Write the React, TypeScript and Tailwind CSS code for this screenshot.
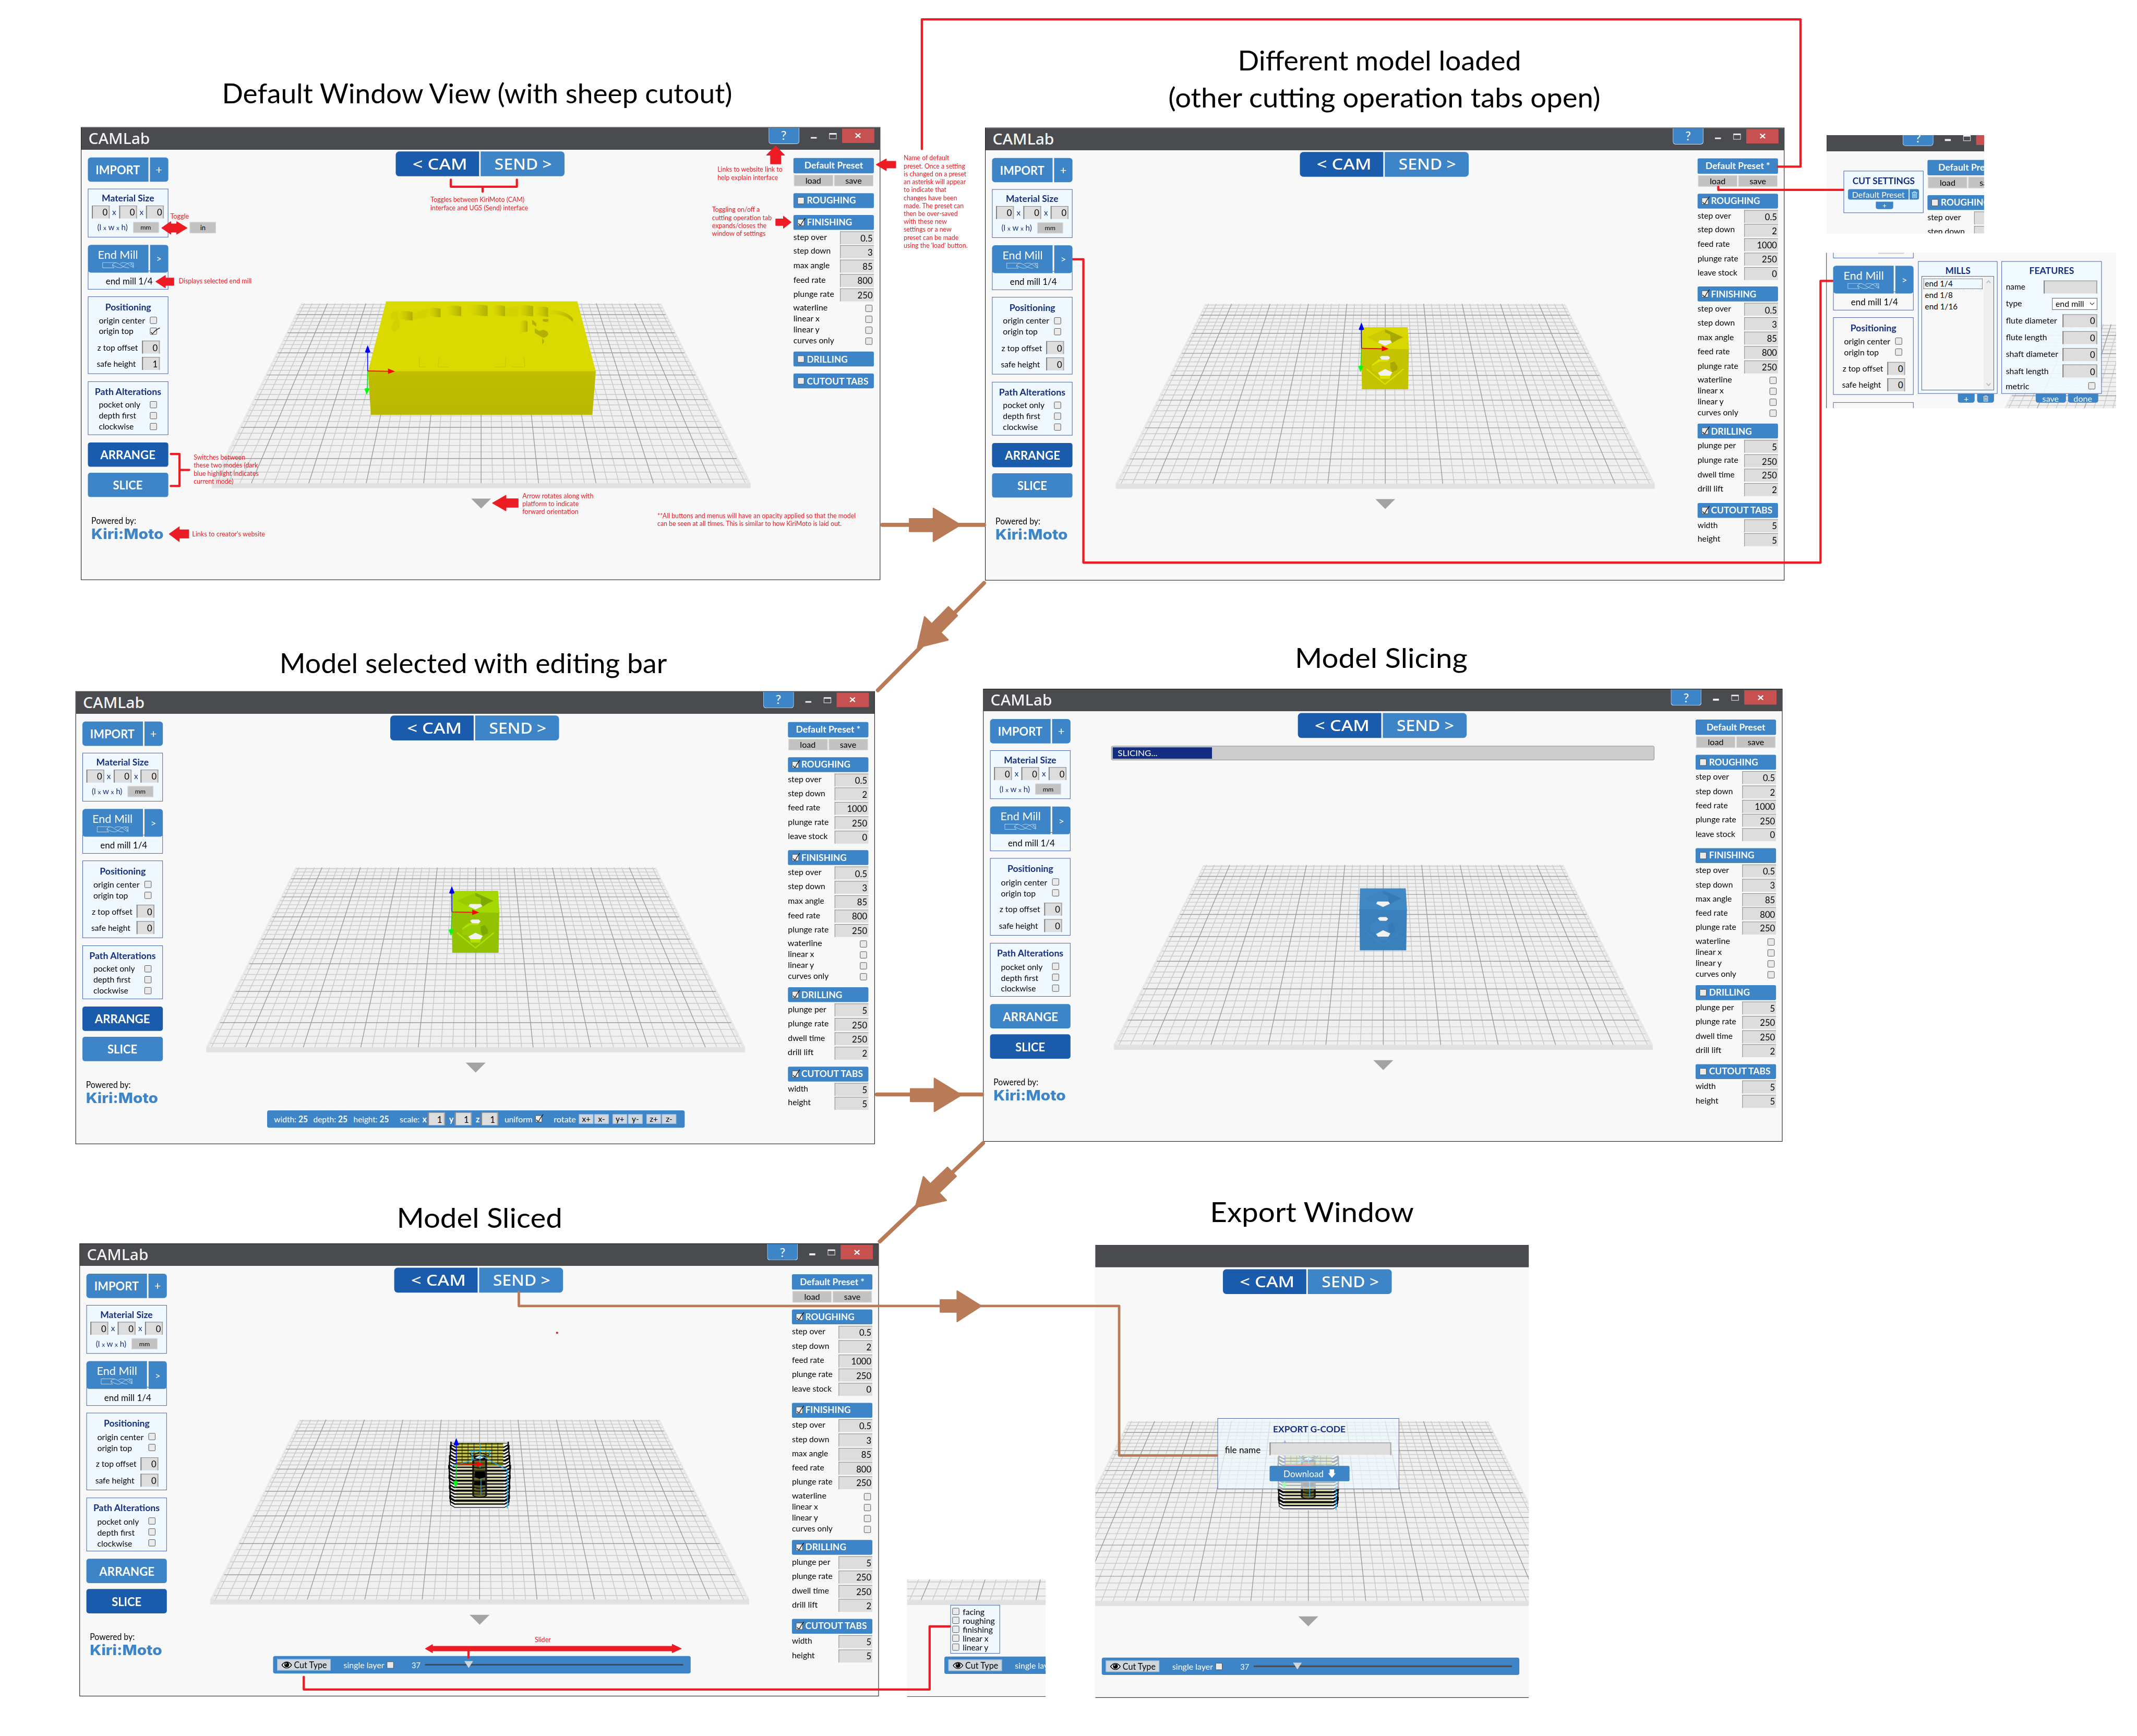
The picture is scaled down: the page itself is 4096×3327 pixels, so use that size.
import { ReactNode, useId, useLayoutEffect, useRef } from "react";

/* Text stretched horizontally to a given width, so labels keep their drawn measure. */
function Fit({ w, className = "", children }: { w: number; className?: string; children: ReactNode }) {
  const ref = useRef<HTMLSpanElement>(null);
  useLayoutEffect(() => {
    const el = ref.current;
    if (el && el.offsetWidth > 0) el.style.transform = `scaleX(${w / el.offsetWidth})`;
  }, [w]);
  return (
    <span className={`inline-block text-left ${className}`} style={{ width: w }}>
      <span ref={ref} className="inline-block origin-left whitespace-pre">
        {children}
      </span>
    </span>
  );
}

function At({ x, y, children, className = "" }: { x: number; y: number; children: ReactNode; className?: string }) {
  return (
    <div className={`absolute ${className}`} style={{ left: x, top: y }}>
      {children}
    </div>
  );
}

/* ---------- small controls ---------- */

function Check({ on = false, header = false }: { on?: boolean; header?: boolean }) {
  return (
    <span className="relative block h-[14px] w-[14px] shrink-0 rounded-[2px] border border-[#4a4a4a] bg-[#eaeaea] shadow-[inset_0_0_0_1px_#f8f8f8]">
      {on && (
        <svg className="absolute -top-[4px] -left-[1px] h-[18px] w-[20px] overflow-visible" viewBox="0 0 20 18" fill="none" stroke="#000">
          <path d={header ? "M2 12 L5 15 L7 15 Q10 8 16 1" : "M2 12 L5 15.5 Q12 6 20 3.5"} strokeWidth="1.3" />
        </svg>
      )}
    </span>
  );
}

function Num({ v, className = "" }: { v: string; className?: string }) {
  return (
    <span
      className={`flex h-[26px] items-center justify-end border-t border-r-[2px] border-l-[2.5px] border-t-[#7f7f7f] border-r-[#a9a4a0] border-l-[#7f7f7f] bg-[#dddddd] pt-[2px] pr-[2px] text-[17.5px] leading-none text-black ${className}`}
    >
      {v}
    </span>
  );
}

function GreyButton({ children, className = "" }: { children: ReactNode; className?: string }) {
  return (
    <span className={`flex items-center justify-center border border-[#dcdcdc] bg-[#c2c2c2] leading-none text-black ${className}`}>
      {children}
    </span>
  );
}

function Trash({ className = "" }: { className?: string }) {
  return (
    <svg className={className} viewBox="0 0 12 14" fill="none" stroke="#fff" strokeWidth="1">
      <path d="M0.5 3 H11.5 M4 3 V1 H8 V3 M1.8 3 V13.2 H10.2 V3 M4 5 V11.5 M6 5 V11.5 M8 5 V11.5" />
    </svg>
  );
}

/* ---------- left panel ---------- */

function Box({ className = "", plain = false, children }: { className?: string; plain?: boolean; children?: ReactNode }) {
  return (
    <div className={`border-[1.5px] border-[#3f5aa6] ${plain ? "bg-[#f8f8f8]" : "bg-[#f0f9ff]"} ${className}`}>{children}</div>
  );
}

function CheckRow({ label, w, on = false, className = "" }: { label: string; w: number; on?: boolean; className?: string }) {
  return (
    <div className={`flex items-center justify-between pr-[22px] pl-[21px] text-[17px] leading-none ${className}`}>
      <Fit w={w}>{label}</Fit>
      <Check on={on} />
    </div>
  );
}

function ModeButton({ active, w, children, className = "" }: { active: boolean; w: number; children: string; className?: string }) {
  return (
    <div
      className={`flex h-[49px] items-center justify-center rounded-[5px] pt-[2px] text-[23px] leading-none font-bold text-white ${active ? "bg-[#1a5bab]" : "bg-[#3e85c7]"} ${className}`}
    >
      <Fit w={w}>{children}</Fit>
    </div>
  );
}

/* "partial" leaves only the tool and positioning groups, with the plain background. */
function LeftPanel({ originTop, safe, mode, partial }: { originTop: boolean; safe: string; mode: string; partial?: boolean }) {
  return (
    <div className="flex w-[162px] flex-col pt-[16px]">
      {partial ? (
        <div className="h-[49px]" />
      ) : (
        <div className="flex h-[49px] gap-[3px] text-white">
          <div className="flex w-[122px] items-center justify-center rounded-l-[6px] bg-[#3e85c7] pt-[2px] text-[23px] leading-none font-bold">
            <Fit w={90}>IMPORT</Fit>
          </div>
          <div className="flex w-[37px] items-center justify-center rounded-r-[6px] bg-[#3e85c7] text-[23px] leading-none">+</div>
        </div>
      )}

      {partial ? (
        <Box plain className="mt-[14px] flex h-[98px] items-end justify-end pr-[18px] pb-[8px]">
          <GreyButton className="h-[22px] w-[52px]">{null}</GreyButton>
        </Box>
      ) : (
        <Box className="mt-[14px] flex h-[98px] flex-col items-center pt-[9px] text-[#142d80]">
          <div className="text-[17.5px] leading-[20px] font-bold">
            <Fit w={106}>Material Size</Fit>
          </div>
          <div className="mt-[4px] flex items-center gap-[5.5px] text-[16px] leading-none">
            <Num v="0" className="w-[36px]" />
            <span>x</span>
            <Num v="0" className="w-[36px]" />
            <span>x</span>
            <Num v="0" className="w-[36px]" />
          </div>
          <div className="mt-[7px] flex w-full items-center justify-between pr-[18px] pl-[18px]">
            <Fit w={61} className="-mt-[2px] text-[17px] leading-none">
              (l <span className="text-[13px]">x</span> w <span className="text-[13px]">x</span> h)
            </Fit>
            <GreyButton className="h-[22px] w-[52px] text-[13px]">mm</GreyButton>
          </div>
        </Box>
      )}

      <div className="relative z-10 mt-[15px] flex h-[56px] gap-[3px] text-white">
        <div className="flex w-[122px] flex-col items-center rounded-l-[6px] bg-[#3e85c7] pt-[7px] text-[23px] leading-[24px]">
          <Fit w={81}>End Mill</Fit>
          <svg className="mt-[4px] h-[12px] w-[64px]" viewBox="0 0 64 12" fill="none" stroke="#d5e8fa" strokeWidth="0.9">
            <path d="M24 0.7 H0.7 V11.3 H24 M24 0.7 C36 0.7 38 11.3 54 11.3 M24 11.3 C18 7 20 2 28 0.7 M20 5 C26 9 30 11.3 36 11.3 C44 11.3 46 0.7 60 0.7 M36 2.5 C42 0 46 0.7 49 2 C54 4 56 9 62 10 M62.8 0.7 V11.3 M62.8 0.7 L57 4 L61 6 L62.8 10" />
          </svg>
        </div>
        <div className="flex w-[37px] items-center justify-center rounded-r-[6px] bg-[#3e85c7] text-[19px] leading-none">&gt;</div>
      </div>
      <Box plain={partial} className="-mt-[4px] flex h-[38px] items-center justify-center pt-[4px] pl-[4px] text-[18px] leading-none text-black">
        <Fit w={94}>end mill 1/4</Fit>
      </Box>

      <Box plain={partial} className="mt-[14px] h-[156px] pt-[10px]">
        <div className="flex justify-center text-[17.5px] leading-[22px] font-bold text-[#142d80]">
          <Fit w={92}>Positioning</Fit>
        </div>
        <CheckRow label="origin center" w={93} className="mt-[4px] h-[22px]" />
        <CheckRow label="origin top" w={70} on={originTop} className="h-[22px]" />
        <div className="mt-[5px] flex h-[33px] items-center justify-between pr-[16px] pl-[18px] text-[17px] leading-none">
          <Fit w={82}>z top offset</Fit>
          <Num v="0" className="w-[36px]" />
        </div>
        <div className="flex h-[33px] items-center justify-between pr-[16px] pl-[17px] text-[17px] leading-none">
          <Fit w={79}>safe height</Fit>
          <Num v={safe} className="w-[36px]" />
        </div>
      </Box>

      <Box plain={partial} className="mt-[15px] h-[108px] pt-[9px]">
        {!partial && (
          <>
            <div className="flex justify-center text-[17.5px] leading-[22px] font-bold text-[#142d80]">
              <Fit w={134}>Path Alterations</Fit>
            </div>
            <CheckRow label="pocket only" w={84} className="mt-[4px] h-[22px]" />
            <CheckRow label="depth first" w={75} className="h-[22px]" />
            <CheckRow label="clockwise" w={70} className="h-[22px]" />
          </>
        )}
      </Box>

      {!partial && (
        <>
          <ModeButton active={mode === "arrange"} w={111} className="mt-[15px]">ARRANGE</ModeButton>
          <ModeButton active={mode === "slice"} w={60} className="mt-[12px]">SLICE</ModeButton>
          <div className="mt-[38px] pl-[7px] text-[17.5px] leading-[20px] text-black">
            <Fit w={90}>Powered by:</Fit>
          </div>
          <div className="mt-[1px] pl-[7px] font-['Inter'] text-[29px] leading-[30px] font-extrabold text-[#3e85c7]">
            <Fit w={146}>Kiri:Moto</Fit>
          </div>
        </>
      )}
    </div>
  );
}

/* ---------- right panel ---------- */

type Item = [string, string?];
type Section = { name: string; w: number; on?: boolean; open?: boolean; fields: Item[]; checks?: string[] };

const labelW: Record<string, number> = {
  "step over": 67,
  "step down": 75,
  "max angle": 73,
  "feed rate": 65,
  "plunge rate": 82,
  "leave stock": 80,
  waterline: 69,
  "linear x": 53,
  "linear y": 53,
  "curves only": 82,
  "plunge per": 77,
  "dwell time": 75,
  "drill lift": 52,
  width: 41,
  height: 46,
};

function sections(open: boolean, marks: boolean): Section[] {
  return [
    {
      name: "ROUGHING", w: 99, on: open && marks, open,
      fields: [["step over", "0.5"], ["step down", "2"], ["feed rate", "1000"], ["plunge rate", "250"], ["leave stock", "0"]],
    },
    {
      name: "FINISHING", w: 91, on: marks, open: true,
      fields: [["step over", "0.5"], ["step down", "3"], ["max angle", "85"], ["feed rate", "800"], ["plunge rate", "250"]],
      checks: ["waterline", "linear x", "linear y", "curves only"],
    },
    {
      name: "DRILLING", w: 82, on: open && marks, open,
      fields: [["plunge per", "5"], ["plunge rate", "250"], ["dwell time", "250"], ["drill lift", "2"]],
    },
    { name: "CUTOUT TABS", w: 124, on: open && marks, open, fields: [["width", "5"], ["height", "5"]] },
  ];
}

const firstRows: Section[] = [
  { name: "ROUGHING", w: 99, open: true, fields: [["step over", ""], ["step down", ""]] },
];

function RightPanel({ list, star }: { list: Section[]; star: boolean }) {
  return (
    <div className="flex w-[162px] flex-col pt-[17px]">
      <div className="flex h-[31px] items-center justify-center rounded-[3px] bg-[#3e85c7] text-[17.5px] leading-none font-bold text-white">
        <Fit w={star ? 130 : 118}>{star ? "Default Preset *" : "Default Preset"}</Fit>
      </div>
      <div className="mt-[3px] flex h-[23px] justify-between px-[1px]">
        <GreyButton className="w-[79px] text-[17px]">load</GreyButton>
        <GreyButton className="w-[79px] text-[17px]">save</GreyButton>
      </div>
      <div className="mt-[14px] flex flex-col">
        {list.map((s) => (
          <div key={s.name} className={s.open ? "mb-[11px]" : "mb-[14px]"}>
            <div className="flex h-[30px] items-center gap-[5px] rounded-[3px] bg-[#3e85c7] pl-[8px] text-[17.5px] leading-none font-bold text-white">
              <Check on={s.on} header />
              <Fit w={s.w}>{s.name}</Fit>
            </div>
            {s.open && (
              <div className="mt-[3px] text-[17px] leading-none text-black">
                {s.fields.map(([l, v]) => (
                  <div key={l} className="flex h-[28.8px] items-start justify-between">
                    <Fit w={labelW[l]} className="pt-[2px]">{l}</Fit>
                    <span className="flex h-[26px] w-[68px] items-center justify-end border-t-[1.5px] border-l-[1.5px] border-[#858585] bg-[#dddddd] pt-[1px] pr-[2px] text-[17.5px]">
                      {v}
                    </span>
                  </div>
                ))}
                {s.checks?.map((l) => (
                  <div key={l} className="flex h-[22px] items-start justify-between pr-[3px]">
                    <Fit w={labelW[l]} className="pt-[1px]">{l}</Fit>
                    <span className="pt-[5px]">
                      <Check />
                    </span>
                  </div>
                ))}
              </div>
            )}
          </div>
        ))}
      </div>
    </div>
  );
}

/* ---------- scene ---------- */

const CX = 805;
const HORIZON = -376;

function Bed() {
  const minor: string[] = [];
  const major: string[] = [];
  const half = (v: number) => 0.02119 * v;
  for (let n = -23; n <= 23; n++) {
    const d = `M${(CX + n * half(730)).toFixed(1)} 354 L${(CX + n * half(1092)).toFixed(1)} 716`;
    (n % 5 === 0 ? major : minor).push(d);
  }
  for (let k = -3; k <= 33; k++) {
    const v = 1 / (0.0013286 - 1.2306e-5 * k);
    const x = half(v) * 23.3;
    const y = (v + HORIZON).toFixed(1);
    const d = `M${(CX - x).toFixed(1)} ${y} H${(CX + x).toFixed(1)}`;
    (k % 5 === 0 ? major : minor).push(d);
  }
  return (
    <g>
      <path d="M442 354 H1168 L1348 716 V726 H262 V716 Z" fill="#e8e8e8" />
      <path d="M445 354 H1165 L1341 716 H269 Z" fill="#f0f0f0" />
      <path d="M263 716 H1347 V726 H264 Z" fill="#e1e1e1" />
      <path d={minor.join("")} stroke="#c9c9c9" strokeWidth="1.5" fill="none" />
      <path d={major.join("")} stroke="#9c9c9c" strokeWidth="1.5" fill="none" />
      <path d="M785 747 H825 L805 767 Z" fill="#a3a3a3" />
    </g>
  );
}

function Axes({ x, y }: { x: number; y: number }) {
  return (
    <g transform={`translate(${x} ${y})`}>
      <path d="M0 0 V-42" stroke="#0000ff" strokeWidth="1.6" />
      <path d="M0 -52 L5.5 -38 Q0 -35 -5.5 -38 Z" fill="#0000ff" />
      <path d="M0 0 L-1 38" stroke="#00dd20" strokeWidth="1.6" />
      <path d="M-2 48 L-6.5 36 Q-1 33 4 36 Z" fill="#00ff10" />
      <path d="M0 0 L44 0.8" stroke="#ff0000" strokeWidth="1.8" />
      <path d="M55 1 L41 -5 V6 Z" fill="#ff0000" />
    </g>
  );
}

function SheepBlock() {
  const id = useId();
  const walls = [
    [398, 198, 70, 57], [545, 178, 61, 57], [636, 165, 72, 63], [752, 160, 86, 68],
    [866, 163, 58, 66], [990, 163, 73, 67], [1075, 171, 62, 61],
  ];
  return (
    <g transform="translate(476 303.5) scale(0.40816 0.33333)">
      <defs>
        <linearGradient id={id}>
          <stop offset="0" stopColor="#dada00" />
          <stop offset="0.45" stopColor="#cccb00" />
          <stop offset="1" stopColor="#b1af00" />
        </linearGradient>
        <linearGradient id={id + "f"} x2="0" y2="1">
          <stop offset="0" stopColor="#c0be00" />
          <stop offset="1" stopColor="#b9b700" />
        </linearGradient>
      </defs>
      <path d="M337 140 H1281 L1372 563 H248 Z" fill="#dada00" />
      <path d="M248 562 H1372 L1355 825 H262 Z" fill={`url(#${id}f)`} />
      <path d="M337 140 H1281" stroke="#e2e27a" strokeWidth="3" />
      <path d="M358 215 Q372 196 400 198 V253 Q372 262 362 240 Z M362 300 L374 258 L404 253 V300 L374 326 Z" fill="#d2d200" />
      <path d="M468 215 L545 180 V235 L468 250 Z M925 178 L990 166 V229 L925 229 Z" fill="#d3d300" />
      {walls.map(([x, y, w, h]) => (
        <path key={x} d={`M${x} ${y + 4} Q${x + w / 2} ${y - 6} ${x + w} ${y + 6} V${y + h} Q${x + w / 2} ${y + h} ${x} ${y + h - 12} Z`} fill={`url(#${id})`} />
      ))}
      <path d="M1137 192 Q1225 190 1260 245 L1258 264 Q1225 214 1137 214 Z" fill={`url(#${id})`} />
      <path d="M998 262 Q1016 244 1035 262 V320 Q1016 332 998 320 Z" fill={`url(#${id})`} />
      <path d="M1058 250 L1078 272 V290 L1058 276 Z M1110 246 H1138 V260 L1124 264 L1110 258 Z M1071 302 L1092 318 L1112 310 Q1136 318 1138 336 Q1132 356 1112 360 L1071 330 Z M1107 362 L1116 372 V388 L1107 398 Z" fill="#b3b100" />
      <path d="M501 480 V536 H532 M598 480 L594 536 H648 M870 536 H925 L928 476 M960 536 H1021 L1019 480" stroke="#c2c000" strokeWidth="2.5" fill="none" />
      <path d="M248 562 H1372" stroke="#c6c400" strokeWidth="2" />
    </g>
  );
}

type CubeColors = { top: string; front: string; dark: string; mid: string; light: string };
const yellow: CubeColors = { top: "#d8d800", front: "#c3c300", dark: "#a9a800", mid: "#cccb00", light: "#e2e200" };
const lime: CubeColors = { top: "#a3d800", front: "#93c300", dark: "#7fa800", mid: "#9acb00", light: "#b3e200" };
const blue: CubeColors = { top: "#4089c5", front: "#3a80bd", dark: "#377bb6", mid: "#3d84c1", light: "#3e86c3" };

function Cube({ c }: { c: CubeColors }) {
  return (
    <g transform="translate(694.5 362.5) scale(0.33333)">
      <path d="M191 115 H467 L475 250 H187 Z" fill={c.top} />
      <path d="M187 242 L474 248 L470 490 H190 Z" fill={c.front} />
      <path d="M220 176 L330 127 L440 176 L330 228 Z" fill={c.mid} />
      <path d="M330 127 L440 176 L410 188 L372 212 L362 190 V160 L330 146 Z" fill={c.dark} />
      <path d="M300 160 H362 V194 H298 Z" fill={c.mid} />
      <path d="M296 195 H362 L372 208 L330 228 L288 208 Z" fill="#f2f2f2" />
      <path d="M298 296 L310 289 H350 L361 300 L350 312 H310 Z" fill="#f2f2f2" />
      <path d="M250 342 L290 310 L362 314 L250 360 Z" fill={c.light} />
      <path d="M250 350 L300 322 H362 L386 322 L409 352 L406 368 L372 390 L330 370 L290 390 L250 376 Z" fill={c.mid} />
      <path d="M362 330 L386 322 L407 352 L405 372 L374 388 L362 362 Z" fill={c.dark} />
      <path d="M330 368 L374 388 L362 408 H300 L287 392 Z" fill="#f2f2f2" />
      <path d="M298 408 H362 L358 428 H302 Z" fill={c.light} />
      <path d="M218 368 L330 460 L442 368" stroke={c.light} strokeWidth="7" fill="none" />
    </g>
  );
}

function SlicedModel() {
  const layers: ReactNode[] = [];
  for (let i = 0; i < 19; i++) {
    const y = 205 + i * 20.2;
    const spread = i < 7 ? i * 1.6 : 11 - (i - 7) * 0.7;
    const l = 205 - spread;
    const r = 551 + spread;
    layers.push(
      <g key={i}>
        <path d={`M${l + 3} ${y - 6} L${l + 26} ${y + 8} H${r - 26} L${r - 3} ${y - 6}`} stroke="#fff" strokeWidth="4" fill="none" />
        <path d={`M${l} ${y - 18} V${y} L${l + 26} ${y + 15} H${r - 26} L${r} ${y} V${y - 18}`} stroke="#080808" strokeWidth={i === 18 ? 4 : i % 3 === 1 ? 12 : 8} fill="none" />
        {i < 18 && <path d={`M236 ${y + 6} H522`} stroke="#d6d48a" strokeWidth="6" />}
      </g>,
    );
  }
  return (
    <g transform="translate(679 336) scale(0.33333)">
      <path d="M205 205 L225 196 H530 L553 208 L558 350 L556 578 L530 592 H225 L199 578 V350 Z" fill="#e8e8e8" />
      {layers}
      <path d="M240 194 H520 V330 H240 Z" fill="#77760c" />
      <path d="M240 210 H520 M240 229 H520 M240 248 H520 M240 268 H520 M240 287 H520 M240 306 H520" stroke="#dfdd84" strokeWidth="7" />
      <path d="M208 196 H548 M240 220 H520 M240 239 H520 M240 258 H520 M240 278 H520 M240 297 H520 M240 320 H520 M236 194 V320 M272 194 V320 M308 194 V320 M344 194 V320 M416 194 V320 M452 194 V320 M488 194 V320" stroke="#111" strokeWidth="3" fill="none" />
      <path d="M334 290 H422 V515 Q378 535 334 515 Z" fill="#4a4910" opacity="0.75" />
      <path d="M336 290 V512 M342 290 V512 M414 290 V512 M420 290 V512 M336 512 Q378 535 420 512 M340 440 Q378 460 416 440 M340 460 Q378 480 416 460 M340 480 Q378 500 416 480 M340 340 Q378 355 416 340 M318 256 L330 275 L375 250 L430 272 L440 256" stroke="#000" strokeWidth="4" fill="none" />
      <path d="M346 270 H412 V300 H346 Z M350 366 H410 L414 400 L378 412 L346 400 Z M346 425 H412 V450 H346 Z" fill="#000" />
      <path d="M350 283 L378 272 L404 284 L378 292 Z" fill="#fff" />
      <path d="M380 194 V345 M320 242 H438 V276 M331 244 V296 M210 336 L385 282 M380 266 L545 358 V590 M386 408 V510" stroke="#1ba9ee" strokeWidth="4.5" fill="none" />
      <g transform="translate(237 321) scale(3)">
        <Axes x={0} y={0} />
      </g>
    </g>
  );
}

/* ---------- application window ---------- */

function Tabs() {
  return (
    <div className="flex h-[50px] gap-[3px] font-['Noto_Sans'] text-[30px] leading-none font-medium text-white">
      <div className="flex w-[168px] items-center justify-center rounded-l-[7px] bg-[#1a5bab] pl-[10px]">
        <Fit w={110}>&lt; CAM</Fit>
      </div>
      <div className="flex w-[169px] items-center justify-center rounded-r-[7px] bg-[#3e85c7] pl-[2px]">
        <Fit w={115}>SEND &gt;</Fit>
      </div>
    </div>
  );
}

function CutBar({ short = false }: { short?: boolean }) {
  return (
    <div className="flex h-[35px] w-[841px] items-center rounded-[4px] bg-[#3e85c7] pl-[8px] text-[17px] leading-none text-white">
      <div className="flex h-[23px] w-[108px] items-center justify-center gap-[4px] border border-[#8fb8dd] bg-[#cfd6dd] text-black">
        <svg className="h-[14px] w-[21px]" viewBox="0 0 21 14">
          <path d="M0.7 7 Q10.5 -5.5 20.3 7 Q10.5 19.5 0.7 7 Z" fill="#fff" stroke="#000" strokeWidth="1.6" />
          <circle cx="10.5" cy="6.6" r="5" fill="#000" />
          <path d="M8 6 A3 3 0 0 1 10.5 3.4" stroke="#fff" strokeWidth="1.3" fill="none" />
        </svg>
        <Fit w={66} className="text-[17.5px]">Cut Type</Fit>
      </div>
      <Fit w={82} className="ml-[26px]">single layer</Fit>
      {!short && (
        <>
          <span className="ml-[5px]">
            <Check />
          </span>
          <Fit w={18} className="ml-[36px]">37</Fit>
          <div className="relative ml-[9px] h-[3px] w-[520px] bg-[#47484c]">
            <svg className="absolute -top-[6px] left-[79px] h-[14px] w-[18px]" viewBox="0 0 18 14">
              <path d="M0 0 H18 L9 14 Z" fill="#cfd6dd" />
            </svg>
          </div>
        </>
      )}
    </div>
  );
}

function ScaleField({ k }: { k: string }) {
  return (
    <span className="flex items-center gap-[3px]">
      <b>{k}</b>
      <Num v="1" className="w-[34px] !pr-[4px]" />
    </span>
  );
}

function RotateKey({ k }: { k: string }) {
  return (
    <span className="flex h-[19px] w-[29px] items-center justify-center border border-[#9fc2e2] bg-[#cfd6dd] text-[16px] text-black">{k}</span>
  );
}

function EditBar() {
  return (
    <div className="flex h-[35px] w-[841px] items-center rounded-[4px] bg-[#3e85c7] pl-[14px] text-[17px] leading-none text-white">
      <Fit w={68}>width: <b>25</b></Fit>
      <Fit w={69} className="ml-[11px]">depth: <b>25</b></Fit>
      <Fit w={71} className="ml-[12px]">height: <b>25</b></Fit>
      <Fit w={40} className="ml-[22px]">scale:</Fit>
      <div className="ml-[6px] flex gap-[8px]">
        <ScaleField k="x" />
        <ScaleField k="y" />
        <ScaleField k="z" />
      </div>
      <Fit w={57} className="ml-[13px]">uniform</Fit>
      <span className="ml-[5px]">
        <Check on header />
      </span>
      <Fit w={45} className="ml-[23px]">rotate</Fit>
      <div className="ml-[6px] flex gap-[8px]">
        {["x", "y", "z"].map((k) => (
          <span key={k} className="flex gap-[2px]">
            <RotateKey k={k + "+"} />
            <RotateKey k={k + "-"} />
          </span>
        ))}
      </div>
    </div>
  );
}

function Progress() {
  return (
    <div className="flex h-[29px] w-[1094px] items-center rounded-[3px] border-[1.5px] border-[#8a8a8a] bg-[#cdcdcd] p-[2px]">
      <div className="flex h-full w-[200px] items-center bg-[#142d80] pl-[10px] text-[17px] leading-none text-white">
        <Fit w={80}>SLICING...</Fit>
      </div>
    </div>
  );
}

type WinProps = {
  title?: boolean;
  controls?: boolean;
  left?: "full" | "partial" | "none";
  tabs?: boolean;
  right?: "full" | "first" | "none";
  open?: boolean;
  marks?: boolean;
  star?: boolean;
  originTop?: boolean;
  safe?: string;
  mode?: string;
  scene?: ReactNode;
  children?: ReactNode;
};

function AppWindow({
  title = true, controls = true, left = "full", tabs = true, right = "full", open = true, marks = true,
  star = false, originTop = false, safe = "0", mode = "arrange", scene, children,
}: WinProps) {
  return (
    <div className="relative flex h-[912px] w-[1610px] flex-col overflow-hidden border-[1.5px] border-black bg-[#f8f8f8]">
      <svg className="absolute top-0 left-0 h-[913px] w-[1611px]" viewBox="0 0 1611 913">
        <Bed />
        {scene}
      </svg>
      <div className="relative flex h-[44px] shrink-0 items-start justify-between bg-[#4a4b4f] pr-[11px] pl-[14px] text-white">
        <div className="font-['Noto_Sans'] text-[29.5px] leading-[44px] font-medium text-[#f4f4f4]">{title && <Fit w={124}>CAMLab</Fit>}</div>
        {controls && (
          <div className="flex h-[33px] items-start">
            <div className="flex h-[33px] w-[62px] items-center justify-center rounded-b-[6px] border-[1.5px] border-t-0 border-[#d5e8f8] bg-[#3e85c7] text-[25px] leading-none">?</div>
            <span className="mt-[19px] ml-[23px] block h-[3.5px] w-[12px] bg-[#f0f0f0]" />
            <span className="mt-[11px] ml-[25px] block h-[12px] w-[15px] border-[1.5px] border-t-[3px] border-[#f0f0f0]" />
            <span className="mt-[2px] ml-[11px] flex h-[29px] w-[65px] items-center justify-center bg-[#c75050]">
              <svg className="h-[10px] w-[12px]" viewBox="0 0 12 10" stroke="#fff" strokeWidth="2.4">
                <path d="M1 0.5 L11 9.5 M11 0.5 L1 9.5" />
              </svg>
            </span>
          </div>
        )}
      </div>
      <div className="relative flex grow justify-between pr-[12px] pl-[13px]">
        {left === "none" ? <div className="w-[162px]" /> : <LeftPanel originTop={originTop} safe={safe} mode={mode} partial={left === "partial"} />}
        <div className="w-[343px] pt-[4px]">{tabs && <Tabs />}</div>
        {right === "none" ? <div className="w-[162px]" /> : <RightPanel list={right === "first" ? firstRows : sections(open, marks)} star={star} />}
      </div>
      {children}
    </div>
  );
}

function Crop({ x, y, w, h, dx, dy, children }: { x: number; y: number; w: number; h: number; dx: number; dy: number; children: ReactNode }) {
  return (
    <div className="absolute overflow-hidden bg-[#f8f8f8]" style={{ left: x, top: y, width: w, height: h }}>
      <div className="absolute" style={{ left: dx, top: dy }}>
        {children}
      </div>
    </div>
  );
}

/* ---------- pop-ups ---------- */

function CutSettings() {
  return (
    <Box className="flex h-[85px] w-[161px] flex-col items-center pt-[10px]">
      <div className="text-[17.5px] leading-[20px] font-bold text-[#142d80]">
        <Fit w={125}>CUT SETTINGS</Fit>
      </div>
      <div className="mt-[6px] flex h-[21px] gap-[2px] text-[17px] leading-none text-white">
        <div className="flex w-[122px] items-center justify-center rounded-l-[4px] bg-[#3e85c7]">
          <Fit w={106}>Default Preset</Fit>
        </div>
        <div className="flex w-[19px] items-center justify-center rounded-r-[4px] bg-[#3e85c7]">
          <Trash className="h-[14px] w-[12px]" />
        </div>
      </div>
      <div className="mt-[4px] ml-[4px] flex h-[15px] w-[35px] items-center justify-center rounded-b-[4px] bg-[#3e85c7] text-[14px] leading-none text-white">+</div>
    </Box>
  );
}

function MillsPopup() {
  return (
    <div className="w-[160px]">
      <Box className="flex h-[267px] flex-col items-center px-[6px] pt-[9px]">
        <div className="text-[17.5px] leading-[20px] font-bold text-[#142d80]">
          <Fit w={51}>MILLS</Fit>
        </div>
        <Box plain className="flex h-[230px] w-full justify-between">
          <div className="mt-[4px] ml-[3px] w-[119px] text-[17px] leading-[23px] text-black">
            <div className="h-[21px] border-[1.5px] border-dotted border-black bg-[#f0f9ff] pl-[2px] leading-[18px]">
              <Fit w={56}>end 1/4</Fit>
            </div>
            <div className="pl-[3px]">
              <Fit w={56}>end 1/8</Fit>
            </div>
            <div className="pl-[3px]">
              <Fit w={66}>end 1/16</Fit>
            </div>
          </div>
          <div className="flex w-[20px] flex-col items-center justify-between bg-[#efefef] py-[7px]">
            <svg className="h-[7px] w-[10px]" viewBox="0 0 10 7" fill="none" stroke="#bcbcbc" strokeWidth="2"><path d="M1 6 L5 1.5 L9 6" /></svg>
            <svg className="h-[7px] w-[10px]" viewBox="0 0 10 7" fill="none" stroke="#bcbcbc" strokeWidth="2"><path d="M1 1 L5 5.5 L9 1" /></svg>
          </div>
        </Box>
      </Box>
      <div className="flex justify-end gap-[5px] pr-[7px]">
        <div className="flex h-[18px] w-[34px] items-center justify-center rounded-b-[5px] bg-[#3e85c7] text-[17px] leading-none text-white">+</div>
        <div className="flex h-[18px] w-[34px] items-center justify-center rounded-b-[5px] bg-[#3e85c7]">
          <Trash className="h-[13px] w-[11px]" />
        </div>
      </div>
    </div>
  );
}

function Feature({ l, w, children }: { l: string; w: number; children: ReactNode }) {
  return (
    <div className="flex h-[33.9px] items-center justify-between pr-[8px] pl-[8px] text-[17px] leading-none text-black">
      <Fit w={w} className="-mt-[2px]">{l}</Fit>
      {children}
    </div>
  );
}

function FeaturesPopup() {
  return (
    <div className="w-[202px]">
      <div className="h-[267px] border-[1.5px] border-[#3f5aa6] bg-[#f0f9ff]/90 pt-[9px]">
        <div className="flex justify-center text-[17.5px] leading-[20px] font-bold text-[#142d80]">
          <Fit w={90}>FEATURES</Fit>
        </div>
        <div className="mt-[5px]">
          <Feature l="name" w={39}><Num v="" className="w-[108px]" /></Feature>
          <Feature l="type" w={32}>
            <span className="flex h-[24px] w-[91px] items-center justify-between border border-[#555] bg-white pr-[5px] pl-[6px] text-[17px]">
              <Fit w={57}>end mill</Fit>
              <svg className="h-[6px] w-[9px]" viewBox="0 0 9 6" fill="none" stroke="#333" strokeWidth="1.2"><path d="M0.5 0.7 L4.5 4.7 L8.5 0.7" /></svg>
            </span>
          </Feature>
          <Feature l="flute diameter" w={103}><Num v="0" className="w-[70px]" /></Feature>
          <Feature l="flute length" w={83}><Num v="0" className="w-[70px]" /></Feature>
          <Feature l="shaft diameter" w={105}><Num v="0" className="w-[70px]" /></Feature>
          <Feature l="shaft length" w={86}><Num v="0" className="w-[70px]" /></Feature>
          <div className="flex h-[26px] items-center justify-between pr-[12px] pl-[8px] text-[17px] leading-none">
            <Fit w={47}>metric</Fit>
            <Check />
          </div>
        </div>
      </div>
      <div className="flex justify-end gap-[4px] pr-[7px] text-[17px] leading-none text-white">
        <div className="flex h-[18px] w-[61px] items-center justify-center rounded-b-[5px] bg-[#3e85c7]">save</div>
        <div className="flex h-[18px] w-[61px] items-center justify-center rounded-b-[5px] bg-[#3e85c7]">done</div>
      </div>
    </div>
  );
}

function CutTypeMenu() {
  const items: [string, number][] = [["facing", 44], ["roughing", 65], ["finishing", 61], ["linear x", 52], ["linear y", 52]];
  return (
    <Box className="flex h-[98px] w-[100px] flex-col justify-between py-[3px] pl-[3px]">
      {items.map(([l, w]) => (
        <div key={l} className="flex h-[18px] items-center gap-[7px] text-[17px] leading-none text-black">
          <Check />
          <Fit w={w}>{l}</Fit>
        </div>
      ))}
    </Box>
  );
}

function ExportDialog() {
  return (
    <div className="flex h-[143px] w-[366px] flex-col border-[1.5px] border-[#3f5aa6] bg-[#f0f9ff]/70 pt-[8px]">
      <div className="flex justify-center pl-[4px] text-[18px] leading-[24px] font-bold text-[#142d80]">
        <Fit w={146}>EXPORT G-CODE</Fit>
      </div>
      <div className="mt-[16px] flex items-center pl-[14px] text-[18px] leading-none text-black">
        <Fit w={72} className="pt-[2px]">file name</Fit>
        <Num v="" className="ml-[18px] w-[245px] border-b border-b-white" />
      </div>
      <div className="mt-[21px] ml-[104px] flex h-[31px] w-[161px] items-center justify-center gap-[9px] rounded-[3px] bg-[#3e85c7] text-[19px] leading-none text-white">
        <Fit w={81}>Download</Fit>
        <svg className="h-[17px] w-[15px]" viewBox="0 0 15 17" fill="#fff"><path d="M3 0 H12 V8 H15 L7.5 17 L0 8 H3 Z" /></svg>
      </div>
    </div>
  );
}

/* ---------- board ---------- */

function Note({ x, base, w, children }: { x: number; base: number; w: number; children: ReactNode }) {
  return (
    <At x={x} y={base - 13.2} className="text-[13.6px] leading-[16px] text-[#ed1c24]">
      <Fit w={w}>{children}</Fit>
    </At>
  );
}

function Heading({ x, base, w, children }: { x: number; base: number; w: number; children: string }) {
  return (
    <At x={x} y={base - 49.5} className="text-[55px] leading-[60px] text-black">
      <Fit w={w}>{children}</Fit>
    </At>
  );
}

function BlockArrow({ x, y, angle = 0 }: { x: number; y: number; angle?: number }) {
  return (
    <path
      transform={`translate(${x} ${y}) rotate(${angle})`}
      d="M-102 -12 H-54 V-33 L0 0 L-54 33 V13 H-102 Z"
      fill="#b97a57"
      stroke="#b97a57"
      strokeWidth="3"
      strokeLinejoin="round"
    />
  );
}

function Annotations() {
  return (
    <svg className="pointer-events-none absolute top-0 left-0 h-[3496px] w-[4304px]" viewBox="0 0 4304 3496" fill="none">
      <g stroke="#ed1c24" strokeWidth="4.5" strokeLinejoin="round" strokeLinecap="round">
        <path d="M1856.6 300 V39 H3626.3 V335.6 H3581" />
        <path d="M3460.7 376 V382.4 H3712" />
        <path d="M2160 522 H2182 V1133 H3666.6 V565.7 H3692" />
        <path d="M611.8 3377 V3402.3 H1872.3 V3275.3 H1913" />
        <path d="M344 914.3 H361.5 V978.7 H344 M361.5 946.3 H381" />
        <path d="M908 362 V376 H1041 V362 M972 376 V386" />
        <path d="M943.6 3320 V3338" />
      </g>
      <g fill="#ed1c24" stroke="#ed1c24" strokeWidth="1.5" strokeLinejoin="round">
        <path d="M326 459 L344 446.5 V451 H356 V446.5 L376.5 459 L356 471.5 V467.5 H344 V471.5 Z" />
        <path d="M314 567 L333 555 V560 H350 V574.5 H333 V579.5 Z" />
        <path d="M341 1075.3 L361 1061 V1067 H380 V1083.5 H361 V1090.5 Z" />
        <path d="M1562 294 L1580 312.5 H1572.5 V330 H1552 V312.5 H1544 Z" />
        <path d="M1593 447.5 L1578 459.5 V454 H1562.5 V441 H1578 V435.5 Z" />
        <path d="M1765 331.5 L1785 320 V325 H1804 V338 H1785 V343.5 Z" />
        <path d="M992 1013 L1019 997.5 V1004.5 H1043.5 V1021.5 H1019 V1028.5 Z" />
        <path d="M857 3320 L871 3312 V3315.5 H1354 V3311.5 L1372 3320 L1354 3328 V3324.5 H871 V3328 Z" />
        <circle cx="1122" cy="2684" r="1.5" />
      </g>
      <g stroke="#b97a57" strokeWidth="8" strokeLinecap="round">
        <path d="M1777 1057 H1982" />
        <path d="M1766 2204 H1978" />
        <path d="M1982 1174 L1768 1390" />
        <path d="M1980 2302 L1772 2500" />
      </g>
      <path d="M1045 2602 V2630 H2254 V2931 H2451" stroke="#b97a57" strokeWidth="5" strokeLinejoin="round" strokeLinecap="round" />
      <BlockArrow x={1934} y={1057} />
      <BlockArrow x={1936} y={2205} />
      <BlockArrow x={1848} y={1304} angle={134.5} />
      <BlockArrow x={1844} y={2431} angle={136} />
      <path d="M1894 2618 H1928 V2600 L1976 2630 L1928 2661 V2642 H1894 Z" fill="#b97a57" stroke="#b97a57" strokeWidth="3" strokeLinejoin="round" />
    </svg>
  );
}

export default function App() {
  return (
    <div className="relative h-[3327px] w-[4096px] overflow-hidden bg-white font-['Lato',sans-serif]">
      <div className="absolute top-0 left-0 h-[3496px] w-[4304px] origin-top-left scale-[0.95167]">
        <Heading x={447} base={206} w={1028}>Default Window View (with sheep cutout)</Heading>
        <Heading x={2493} base={140} w={571}>Different model loaded</Heading>
        <Heading x={2353} base={214} w={870}>(other cutting operation tabs open)</Heading>
        <Heading x={563} base={1354} w={780}>Model selected with editing bar</Heading>
        <Heading x={2608} base={1343} w={348}>Model Slicing</Heading>
        <Heading x={799} base={2470} w={333}>Model Sliced</Heading>
        <Heading x={2437} base={2459} w={411}>Export Window</Heading>

        <At x={162.5} y={255.5}>
          <AppWindow
            open={false}
            originTop
            safe="1"
            scene={
              <>
                <SheepBlock />
                <Axes x={576.5} y={490} />
              </>
            }
          />
        </At>
        <At x={1984} y={256.5}>
          <AppWindow star scene={<><Cube c={yellow} /><Axes x={757} y={443.5} /></>} />
        </At>
        <At x={151.5} y={1391.5}>
          <AppWindow star scene={<><Cube c={lime} /><Axes x={757} y={443.5} /></>}>
            <div className="absolute top-[843px] left-[385px]">
              <EditBar />
            </div>
          </AppWindow>
        </At>
        <At x={1980} y={1387}>
          <AppWindow marks={false} mode="slice" scene={<Cube c={blue} />}>
            <div className="absolute top-[114px] left-[257px]">
              <Progress />
            </div>
          </AppWindow>
        </At>
        <At x={160} y={2504}>
          <AppWindow star mode="slice" scene={<SlicedModel />}>
            <div className="absolute top-[830px] left-[389px]">
              <CutBar />
            </div>
          </AppWindow>
        </At>

        <Crop x={3679} y={273} w={317} h={197} dx={-1232} dy={-13}>
          <AppWindow title={false} left="none" tabs={false} right="first" />
        </Crop>
        <At x={3713} y={344}>
          <CutSettings />
        </At>

        <Crop x={3678} y={509} w={584} h={313} dx={0} dy={-211}>
          <AppWindow title={false} controls={false} left="partial" tabs={false} right="none" />
        </Crop>
        <At x={3863} y={526}>
          <MillsPopup />
        </At>
        <At x={4030.5} y={526}>
          <FeaturesPopup />
        </At>

        <Crop x={1827} y={3181} w={279} h={236} dx={-315} dy={-676}>
          <AppWindow title={false} controls={false} left="none" tabs={false} right="none">
            <div className="absolute top-[830px] left-[389px]">
              <CutBar short />
            </div>
          </AppWindow>
        </Crop>
        <At x={1913.5} y={3232}>
          <CutTypeMenu />
        </At>

        <Crop x={2206} y={2507} w={873} h={913} dx={-377} dy={0}>
          <AppWindow title={false} controls={false} left="none" right="none" scene={<SlicedModel />}>
            <div className="absolute top-[830px] left-[389px]">
              <CutBar />
            </div>
          </AppWindow>
        </Crop>
        <At x={2452} y={2856}>
          <ExportDialog />
        </At>

        <div className="absolute top-[447px] left-[382px]">
          <GreyButton className="h-[23px] w-[53px] text-[13.5px]">in</GreyButton>
        </div>

        <Note x={1445} base={346} w={131}>{"Links to website link to\nhelp explain interface"}</Note>
        <Note x={1434} base={427} w={120}>{"Toggling on/off a\ncutting operation tab\nexpands/closes the\nwindow of settings"}</Note>
        <Note x={1820} base={323} w={128.6}>
          {"Name of default\npreset. Once a setting\nis changed on a preset\nan asterisk will appear\nto indicate that\nchanges have been\nmade. The preset can\nthen be over-saved\nwith these new\nsettings or a new\npreset can be made\nusing the 'load' button."}
        </Note>
        <Note x={343} base={440} w={38}>Toggle</Note>
        <Note x={360} base={571} w={147}>Displays selected end mill</Note>
        <Note x={390} base={926} w={131}>{"Switches between\nthese two modes (dark\nblue highlight indicates\ncurrent mode)"}</Note>
        <Note x={387} base={1080} w={147}>Links to creator's website</Note>
        <Note x={1051.5} base={1003} w={143}>{"Arrow rotates along with\nplatform to indicate\nforward orientation"}</Note>
        <Note x={867} base={407} w={197}>{"Toggles between KiriMoto (CAM)\ninterface and UGS (Send) interface"}</Note>
        <Note x={1324} base={1043} w={400}>{"**All buttons and menus will have an opacity applied so that the model\ncan be seen at all times. This is similar to how KiriMoto is laid out."}</Note>
        <Note x={1076.5} base={3307} w={32}>Slider</Note>

        <Annotations />
      </div>
    </div>
  );
}
